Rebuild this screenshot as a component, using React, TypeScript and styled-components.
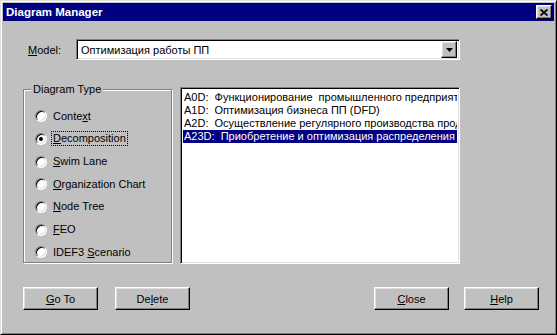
import styled, { createGlobalStyle, css } from 'styled-components';

const GlobalStyle = createGlobalStyle`
  html, body {
    margin: 0;
    padding: 0;
    background: #c0c0c0;
  }
  body {
    font-family: "Liberation Sans", Arial, sans-serif;
    font-size: 11px;
    color: #000;
  }
`;

// Win95 bevels
const raised = css`
  border: 1px solid;
  border-color: #fff #000 #000 #fff;
  box-shadow: inset -1px -1px 0 #808080, inset 1px 1px 0 #dfdfdf;
`;

const sunken = css`
  border: 1px solid;
  border-color: #808080 #fff #fff #808080;
  box-shadow: inset 1px 1px 0 #000, inset -1px -1px 0 #dfdfdf;
`;

const Window = styled.div`
  width: 557px;
  height: 335px;
  box-sizing: border-box;
  background: #c0c0c0;
  border: 1px solid;
  border-color: #dfdfdf #000 #000 #dfdfdf;
  box-shadow: inset 1px 1px 0 #fff, inset -1px -1px 0 #808080;
  padding: 2px;
  display: flex;
  flex-direction: column;
`;

const TitleBar = styled.div`
  height: 18px;
  background: #000080;
  color: #fff;
  font-weight: bold;
  font-size: 11.5px;
  display: flex;
  align-items: center;
  justify-content: space-between;
  padding: 0 2px 0 3px;
`;

const CloseButton = styled.div`
  width: 16px;
  height: 14px;
  box-sizing: border-box;
  background: #c0c0c0;
  ${raised};
  display: flex;
  align-items: center;
  justify-content: center;
`;

const Content = styled.div`
  flex: 1;
  padding: 18px 15px 0 20px;
`;

const ModelRow = styled.div`
  display: flex;
  align-items: center;
  height: 21px;
`;

const ModelLabel = styled.span`
  width: 48px;
  margin-left: 5px;
`;

const Combo = styled.div`
  width: 384px;
  height: 21px;
  box-sizing: border-box;
  background: #fff;
  ${sunken};
  display: flex;
  align-items: center;
  justify-content: space-between;
  padding: 2px 2px 2px 4px;
`;

const DropButton = styled.div`
  width: 16px;
  height: 17px;
  box-sizing: border-box;
  background: #c0c0c0;
  ${raised};
  display: flex;
  align-items: center;
  justify-content: center;
`;

const MiddleRow = styled.div`
  display: flex;
  align-items: flex-start;
  gap: 8px;
  margin-top: 29px;
`;

const GroupBox = styled.div`
  position: relative;
  width: 149px;
  height: 174px;
  box-sizing: border-box;
  border: 1px solid #808080;
  box-shadow: 1px 1px 0 #fff, inset 1px 1px 0 #fff;
  padding: 15px 0 0 11px;
`;

const GroupLabel = styled.span`
  position: absolute;
  top: -7px;
  left: 7px;
  line-height: 13px;
  padding: 0 2px;
  background: #c0c0c0;
`;

const RadioRow = styled.div`
  height: 22.67px;
  display: flex;
  align-items: center;
  gap: 6px;
`;

const RadioDot = styled.span<{ $checked?: boolean }>`
  position: relative;
  width: 12px;
  height: 12px;
  box-sizing: border-box;
  border-radius: 50%;
  background: #fff;
  ${sunken};
  flex-shrink: 0;

  &::after {
    content: '';
    display: ${({ $checked }) => ($checked ? 'block' : 'none')};
    position: absolute;
    left: 3px;
    top: 3px;
    width: 4px;
    height: 4px;
    border-radius: 50%;
    background: #000;
  }
`;

const RadioText = styled.span<{ $focused?: boolean }>`
  line-height: 13px;
  padding: 0 1px;
  border: 1px dotted ${({ $focused }) => ($focused ? '#000' : 'transparent')};
  margin-left: -2px;
`;

const Mn = styled.span`
  text-decoration: underline;
`;

const ListBox = styled.div`
  width: 280px;
  height: 177px;
  margin-top: -2px;
  box-sizing: border-box;
  background: #fff;
  ${sunken};
  padding: 3px 2px 2px 2px;
  overflow: hidden;
`;

const ListItem = styled.div<{ $selected?: boolean }>`
  height: 13px;
  line-height: 13px;
  white-space: pre;
  overflow: hidden;
  padding-left: 1px;
  background: ${({ $selected }) => ($selected ? '#000080' : 'transparent')};
  color: ${({ $selected }) => ($selected ? '#fff' : '#000')};
`;

const ButtonRow = styled.div`
  display: flex;
  justify-content: space-between;
  margin-top: 23px;
`;

const ButtonGroup = styled.div<{ $gap: number }>`
  display: flex;
  gap: ${({ $gap }) => $gap}px;
`;

const Button = styled.button`
  width: 75px;
  height: 23px;
  box-sizing: border-box;
  background: #c0c0c0;
  ${raised};
  font: inherit;
  color: #000;
  padding: 0;
`;

const radios = [
  { pre: 'Conte', mn: 'x', post: 't' },
  { pre: '', mn: 'D', post: 'ecomposition', checked: true },
  { pre: '', mn: 'S', post: 'wim Lane' },
  { pre: '', mn: 'O', post: 'rganization Chart' },
  { pre: '', mn: 'N', post: 'ode Tree' },
  { pre: '', mn: 'F', post: 'EO' },
  { pre: 'IDEF3 ', mn: 'S', post: 'cenario' },
];

// only the part that shows in the list is kept
const diagrams = [
  'A0D:  Функционирование  промышленного предприят',
  'A1D:  Оптимизация бизнеса ПП (DFD)',
  'A2D:  Осуществление регулярного производства прод',
  'A23D:  Приобретение и оптимизация распределения',
];

const App = () => (
  <>
    <GlobalStyle />
    <Window>
      <TitleBar>
        <span>Diagram Manager</span>
        <CloseButton>
          <svg width="8" height="7" viewBox="0 0 8 7">
            <path d="M0.5 0.5 L7.5 6.5 M7.5 0.5 L0.5 6.5" stroke="#000" strokeWidth="1.8" />
          </svg>
        </CloseButton>
      </TitleBar>
      <Content>
        <ModelRow>
          <ModelLabel>
            <Mn>M</Mn>odel:
          </ModelLabel>
          <Combo>
            <span>Оптимизация работы ПП</span>
            <DropButton>
              <svg width="7" height="4" viewBox="0 0 7 4">
                <polygon points="0,0 7,0 3.5,4" fill="#000" />
              </svg>
            </DropButton>
          </Combo>
        </ModelRow>

        <MiddleRow>
          <GroupBox>
            <GroupLabel>Diagram Type</GroupLabel>
            {radios.map((r, i) => (
              <RadioRow key={i}>
                <RadioDot $checked={r.checked} />
                <RadioText $focused={r.checked}>
                  {r.pre}
                  <Mn>{r.mn}</Mn>
                  {r.post}
                </RadioText>
              </RadioRow>
            ))}
          </GroupBox>
          <ListBox>
            {diagrams.map((d, i) => (
              <ListItem key={i} $selected={i === 3}>
                {d}
              </ListItem>
            ))}
          </ListBox>
        </MiddleRow>

        <ButtonRow>
          <ButtonGroup $gap={17}>
            <Button>
              <Mn>G</Mn>o To
            </Button>
            <Button>
              De<Mn>l</Mn>ete
            </Button>
          </ButtonGroup>
          <ButtonGroup $gap={15}>
            <Button>
              <Mn>C</Mn>lose
            </Button>
            <Button>
              <Mn>H</Mn>elp
            </Button>
          </ButtonGroup>
        </ButtonRow>
      </Content>
    </Window>
  </>
);

export default App;
